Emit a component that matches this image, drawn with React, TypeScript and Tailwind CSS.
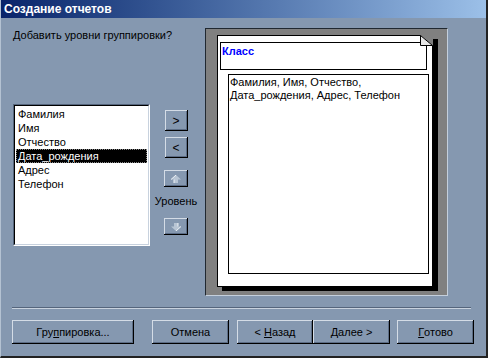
import React from "react"

const font = { fontFamily: '"Liberation Sans", Arial, sans-serif' }

function SmallButton({ children }: { children: React.ReactNode }) {
	return (
		<div className="w-full h-full flex items-center justify-center bg-[#8598b0] shadow-[inset_-1px_-1px_0_#000,inset_1px_1px_0_#d4dce6,inset_-2px_-2px_0_#5c6d86] text-[12px] leading-none text-black">
			{children}
		</div>
	)
}

function Arrow({ down }: { down?: boolean }) {
	return (
		<svg width="10" height="8" viewBox="0 0 10 8" className={down ? "rotate-180" : ""}>
			<polygon points="5,0 10,4.5 7,4.5 7,8 3,8 3,4.5 0,4.5" fill="#b8c5d4" />
			<polyline points="0,4.5 5,0" stroke="#eef2f6" strokeWidth="1" fill="none" />
			<polyline points="3,4.5 3,8" stroke="#eef2f6" strokeWidth="1" fill="none" />
		</svg>
	)
}

function Btn({ w, children }: { w: string; children: React.ReactNode }) {
	return (
		<div
			className={`${w} h-[24px] flex items-center justify-center bg-[#8598b0] shadow-[inset_-1px_-1px_0_#000,inset_1px_1px_0_#d4dce6,inset_-2px_-2px_0_#5c6d86] text-[11px] text-black`}
		>
			{children}
		</div>
	)
}

const items = ["Фамилия", "Имя", "Отчество", "Дата_рождения", "Адрес", "Телефон"]

export default function App() {
	return (
		<div style={font} className="w-[488px] h-[358px] bg-[#8598b0] flex flex-col border-l border-l-[#b4c2d2] border-r-2 border-r-[#222] border-b-2 border-b-[#222] overflow-hidden">
			{/* title bar */}
			<div className="h-[18px] shrink-0 flex items-center pl-[3px] bg-gradient-to-r from-[#0a246a] to-[#9cc0e8]">
				<span className="text-white font-bold text-[12px] leading-none">Создание отчетов</span>
			</div>

			<div className="flex flex-row h-[272px] shrink-0">
				{/* left side */}
				<div className="w-[204px] shrink-0 flex flex-col pl-[12px]">
					<div className="mt-[11px] text-[11px] leading-[13px] text-black">Добавить уровни группировки?</div>
					<div className="mt-[62px] flex flex-row">
						<div className="w-[137px] h-[142px] bg-white border-t border-l border-t-[#55657c] border-l-[#55657c] border-b border-r border-b-white border-r-white">
							<div className="w-full h-full border-t border-l border-t-black border-l-black border-b border-r border-b-[#c8d2de] border-r-[#c8d2de] pt-[1px] pl-[1px]">
								{items.map((it) =>
									it === "Дата_рождения" ? (
										<div key={it} className="h-[14px] mr-[1px] bg-black text-white text-[11px] leading-[12px] pl-[1px] border border-dotted border-[#888]">
											{it}
										</div>
									) : (
										<div key={it} className="h-[14px] text-[11px] leading-[14px] pl-[2px] text-black">
											{it}
										</div>
									)
								)}
							</div>
						</div>
						<div className="ml-[4px] w-[44px] flex flex-col items-center pt-[6px]">
							<div className="w-[23px] h-[21px]"><SmallButton>&gt;</SmallButton></div>
							<div className="w-[23px] h-[21px] mt-[6px]"><SmallButton>&lt;</SmallButton></div>
							<div className="w-[24px] h-[17px] mt-[12px]"><SmallButton><Arrow /></SmallButton></div>
							<div className="mt-[8px] text-[11px] leading-[13px] text-black">Уровень</div>
							<div className="w-[24px] h-[17px] mt-[10px]"><SmallButton><Arrow down /></SmallButton></div>
						</div>
					</div>
				</div>

				{/* preview */}
				<div className="mt-[10px] w-[243px] h-[268px] bg-[#808080] border-t border-l border-t-[#202830] border-l-[#202830] border-b border-r border-b-[#c4cfdc] border-r-[#c4cfdc] pl-[11px] pt-[6px]">
					<div className="relative w-[216px] h-[252px] bg-white border border-black shadow-[5px_4px_0_#000] pl-[2px] pt-[6px]">
						<div className="w-[207px] h-[28px] border border-black pl-[1px] pt-[2px] text-[11px] leading-[13px]">
							<span className="text-[#0000ff] font-bold">Класс</span>
						</div>
						<div className="ml-[8px] mt-[4px] w-[201px] h-[200px] border border-black pl-[1px] pt-[1px] text-[11px] leading-[13px] text-black">
							Фамилия, Имя, Отчество,
							<br />
							Дата_рождения, Адрес, Телефон
						</div>
						<svg className="absolute -top-[1px] -right-[1px]" width="13" height="11" viewBox="0 0 13 11">
							<polygon points="0,0 13,0 13,11" fill="#808080" />
							<polygon points="0.5,0.5 0.5,10.5 12.5,10.5" fill="#e8e8e8" stroke="#000" strokeWidth="1" />
						</svg>
					</div>
				</div>
			</div>

			{/* separator */}
			<div className="ml-[11px] mt-[17px] w-[459px] h-[2px] border-t border-t-[#55657c] border-b border-b-[#c8d2de]" />

			{/* buttons */}
			<div className="flex flex-row mt-[11px] pl-[11px]">
				<Btn w="w-[122px]">Гру<span className="underline">п</span>пировка...</Btn>
				<div className="ml-[18px]"><Btn w="w-[77px]">Отмена</Btn></div>
				<div className="ml-[8px]"><Btn w="w-[76px]">&lt; <span className="underline ml-[3px]">Н</span>азад</Btn></div>
				<Btn w="w-[77px]"><span className="underline">Д</span>алее &gt;</Btn>
				<div className="ml-[7px]"><Btn w="w-[77px]"><span className="underline">Г</span>отово</Btn></div>
			</div>
		</div>
	)
}
